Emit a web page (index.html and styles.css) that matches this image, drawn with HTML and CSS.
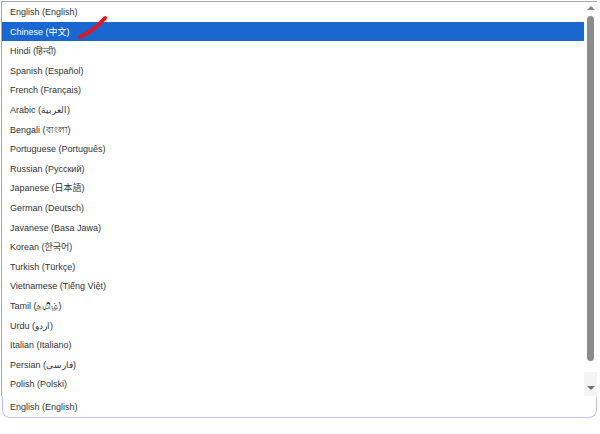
FILE: index.html
```html
<!DOCTYPE html>
<html lang="en">
<head>
  <meta charset="UTF-8" />
  <title>Language</title>
  <link rel="stylesheet" href="styles.css">
</head>
<body>
  <div class="page">
    <!-- open dropdown list -->
    <div class="listbox">
      <ul class="options">
        <li>English (English)</li>
        <li class="selected">Chinese (中文)</li>
        <li>Hindi (हिन्दी)</li>
        <li>Spanish (Español)</li>
        <li>French (Français)</li>
        <li>Arabic (العربية)</li>
        <li>Bengali (বাংলা)</li>
        <li>Portuguese (Português)</li>
        <li>Russian (Русский)</li>
        <li>Japanese (日本語)</li>
        <li>German (Deutsch)</li>
        <li>Javanese (Basa Jawa)</li>
        <li>Korean (한국어)</li>
        <li>Turkish (Türkçe)</li>
        <li>Vietnamese (Tiếng Việt)</li>
        <li>Tamil (தமிழ்)</li>
        <li>Urdu (اردو)</li>
        <li>Italian (Italiano)</li>
        <li>Persian (فارسی)</li>
        <li>Polish (Polski)</li>
      </ul>
      <div class="scrollbar">
        <div class="arrow up"></div>
        <div class="thumb"></div>
        <div class="arrow down"></div>
      </div>
    </div>

    <!-- the select itself -->
    <div class="select">English (English)</div>

    <!-- annotation mark -->
    <svg class="mark" width="40" height="30" viewBox="0 0 40 30">
      <path d="M4 26 C 12 22, 20 17, 29 7" stroke="#e3171c" stroke-width="4" fill="none" stroke-linecap="round"/>
    </svg>
  </div>
</body>
</html>
```

FILE: styles.css
```css
body {
  margin: 0;
  background: #ffffff;
  font-family: "Liberation Sans", Arial, "Noto Sans CJK SC", sans-serif;
  color: #333;
}
.page {
  position: relative;
  width: 600px;
  height: 434px;
}
.listbox {
  margin: 1px 3px 0 1px;
  display: flex;
  border-top: 1px solid #a9a9a9;
  border-left: 1px solid #a9a9a9;
  height: 394px;
  background: #fff;
}
.options {
  list-style: none;
  margin: 0;
  padding: 0;
  flex: 1;
}
.options li {
  height: 19.6px;
  line-height: 21.4px;
  padding-left: 8px;
  font-size: 9px;
  white-space: nowrap;
  overflow: hidden;
}
.options li.selected {
  background: #1a67d2;
  color: #fff;
}
.scrollbar {
  width: 13px;
  display: flex;
  flex-direction: column;
  align-items: center;
  background: linear-gradient(#fff 0, #fff 370px, #f4f4f4 370px);
}
.arrow {
  width: 0;
  height: 0;
  border-left: 4px solid transparent;
  border-right: 4px solid transparent;
}
.arrow.up {
  margin-top: 4px;
  border-bottom: 4px solid #8a8a8a;
}
.arrow.down {
  margin-top: 25px;
  border-top: 4px solid #6e6e6e;
}
.thumb {
  margin-top: 6px;
  width: 7px;
  height: 345px;
  border-radius: 4px;
  background: #8b8b8b;
}
.select {
  margin: 0 3px 0 2px;
  height: 20px;
  line-height: 21px;
  padding-left: 7px;
  font-size: 9px;
  border: 1px solid #c6c0f4;
  border-top-color: transparent;
  border-radius: 0 0 8px 8px;
}
.mark {
  position: absolute;
  left: 76px;
  top: 10px;
}
```
